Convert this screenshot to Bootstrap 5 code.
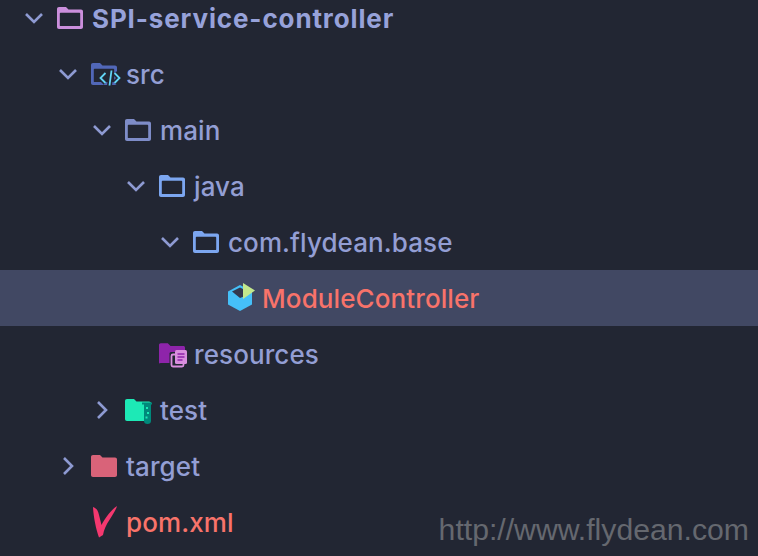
<!DOCTYPE html>
<html lang="en">
<head>
<meta charset="utf-8">
<title>Project tree</title>
<link rel="stylesheet" href="https://cdn.jsdelivr.net/npm/bootstrap@5.3.0/dist/css/bootstrap.min.css">
<style>
html,body{height:100%}
body{background:#222633;overflow:hidden;position:relative;font-family:Inter,"Noto Sans",sans-serif}
.tree-list{margin-top:-10px}
.tree-row{height:56px;font-size:26px;font-weight:500;color:#939ed4;letter-spacing:.1px;white-space:nowrap;padding-left:calc(22px + var(--lv)*34px)}
.tree-row.sel{background:#414863}
.tree-row.root{font-weight:700;color:#97a2da;letter-spacing:.87px}
.lv0{--lv:0}.lv1{--lv:1}.lv2{--lv:2}.lv3{--lv:3}.lv4{--lv:4}.lv5{--lv:5}
.chev{width:24px;height:24px;margin-right:11px;flex:none}
.ico{width:26px;height:26px;flex:none;margin-right:9px;overflow:visible}
.tree-row .red{color:#f8736a}
.mark-url{position:absolute;right:9px;bottom:8px;font:30.2px "Liberation Sans",Arial,sans-serif;color:#65686f;line-height:1.2}
</style>
</head>
<body>
<svg width="0" height="0" class="position-absolute">
<defs>
<symbol id="down" viewBox="0 0 24 24"><path d="M4 8l8 8 8-8" fill="none" stroke="#8e9ad2" stroke-width="2.6"/></symbol>
<symbol id="right" viewBox="0 0 24 24"><path d="M8 4l8 8-8 8" fill="none" stroke="#8e9ad2" stroke-width="2.6"/></symbol>
<symbol id="folder" viewBox="0 0 26 26"><path fill-rule="evenodd" d="M2 2h7l2.500 2.500h12.500c1.200 0 2 .8 2 2V22c0 1.200-.8 2-2 2H2c-1.200 0-2-.8-2-2V4c0-1.200.8-2 2-2zM3.500 7.700c-.4 0-.7.3-.7.7v12c0 .4.3.7.7.7h19c.4 0 .7-.3.7-.7v-12c0-.4-.3-.7-.7-.7z" fill="currentColor"/></symbol>
</defs>
</svg>
<div class="tree-list">
<div class="tree-row root lv0 d-flex align-items-center"><svg class="chev"><use href="#down"/></svg><svg class="ico" style="color:#cb8fdc"><use href="#folder"/></svg><span>SPI-service-controller</span></div>
<div class="tree-row lv1 d-flex align-items-center"><svg class="chev"><use href="#down"/></svg><svg class="ico" viewBox="0 0 26 26"><path fill-rule="evenodd" d="M2 2h7l2.500 2.500h12.500c1.200 0 2 .8 2 2V22c0 1.200-.8 2-2 2H2c-1.200 0-2-.8-2-2V4c0-1.200.8-2 2-2zM3.500 7.700c-.4 0-.7.3-.7.7v12c0 .4.3.7.7.7h19c.4 0 .7-.3.7-.7v-12c0-.4-.3-.7-.7-.7z" fill="#5167b8"/><path d="M14.500 12l-5 5 5 5M23.500 12l5 5-5 5M20.500 9.500l-2 15" fill="none" stroke="#222633" stroke-width="5"/><path d="M14.500 12l-5 5 5 5M23.500 12l5 5-5 5M20.500 9.500l-2 15" fill="none" stroke="#62d4f5" stroke-width="1.800"/></svg><span>src</span></div>
<div class="tree-row lv2 d-flex align-items-center"><svg class="chev"><use href="#down"/></svg><svg class="ico" style="color:#7e8cc8"><use href="#folder"/></svg><span>main</span></div>
<div class="tree-row lv3 d-flex align-items-center"><svg class="chev"><use href="#down"/></svg><svg class="ico" style="color:#7ca6f0"><use href="#folder"/></svg><span>java</span></div>
<div class="tree-row lv4 d-flex align-items-center"><svg class="chev"><use href="#down"/></svg><svg class="ico" style="color:#7ca6f0"><use href="#folder"/></svg><span>com.flydean.base</span></div>
<div class="tree-row sel lv5 d-flex align-items-center"><span class="chev invisible"></span><svg class="ico" viewBox="-1 0 26 26"><path d="M12 0L24 6.500v13L12 26 0 19.500v-13z" fill="#45c0f8"/><path d="M4 6.500L12 2.500l5 2.500v6l-5 2z" fill="#33394f"/><path d="M15-2l12 7.500L15 14z" fill="#c3e88d"/></svg><span class="red">ModuleController</span></div>
<div class="tree-row lv3 d-flex align-items-center"><span class="chev invisible"></span><svg class="ico" viewBox="0 0 26 26"><path d="M0 4c0-1 .7-1.700 1.700-1.700h7.100l2.700 2.700h12.800c1 0 1.700.7 1.700 1.700v15.300H1.700C.7 22 0 23.300 0 21.300z" fill="#8e24aa"/><rect x="10.500" y="11" width="14" height="15.500" rx="1.500" fill="#222633"/><rect x="12.500" y="13.500" width="12" height="12" rx="1.500" fill="none" stroke="#d98ede" stroke-width="1.800"/><rect x="16" y="9" width="12" height="14" rx="1.500" fill="#d98ede"/><path d="M18.500 13h7M18.500 16h7M18.500 19h5" stroke="#8e24aa" stroke-width="1.300"/></svg><span>resources</span></div>
<div class="tree-row lv2 d-flex align-items-center"><svg class="chev"><use href="#right"/></svg><svg class="ico" viewBox="0 0 26 26"><path d="M2 2h7l2.500 2.500h12.500c1.200 0 2 .8 2 2V22c0 1.200-.8 2-2 2H2c-1.200 0-2-.8-2-2V4c0-1.200.8-2 2-2z" fill="#1de9b6"/><path d="M17 5.500h10v2h-1v16.500c0 2-1.300 3-3.500 3s-3.500-1-3.500-3V7.500h-2z" fill="#00897b"/><path d="M21 10h2v2h-2zM22 15h2v2h-2zM20.500 19.500h2v2h-2z" fill="#1de9b6"/></svg><span>test</span></div>
<div class="tree-row lv1 d-flex align-items-center"><svg class="chev"><use href="#right"/></svg><svg class="ico" viewBox="0 0 26 26"><path d="M2 2h7l2.500 2.500h12.500c1.200 0 2 .8 2 2V22c0 1.200-.8 2-2 2H2c-1.200 0-2-.8-2-2V4c0-1.200.8-2 2-2z" fill="#d96379"/></svg><span>target</span></div>
<div class="tree-row lv1 d-flex align-items-center"><span class="chev invisible"></span><svg class="ico" viewBox="0 0 26 26"><path d="M2-2C5-1 7 1 8 6l2.500 10C14 9 20 1 26-3 24 5 14 14 12 26l-4 2.500C5 20 2.500 8 2-2z" fill="#f4386f"/></svg><span class="red">pom.xml</span></div>
</div>
<div class="mark-url">http://www.flydean.com</div>
</body>
</html>
